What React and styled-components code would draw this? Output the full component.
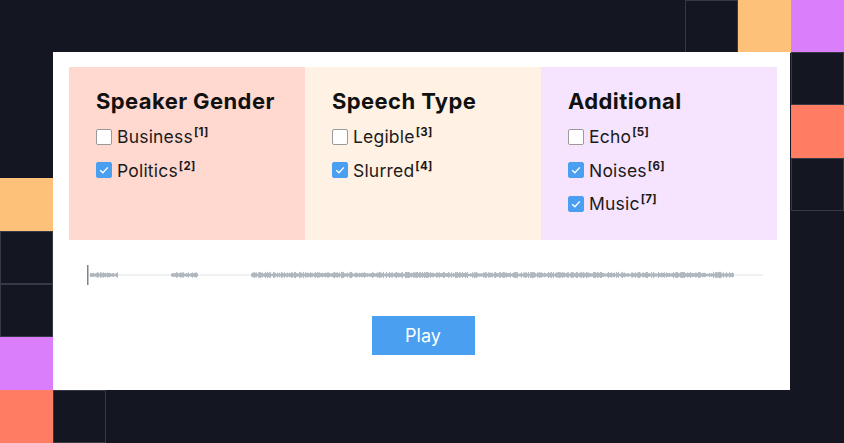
import React from 'react'
import styled, { createGlobalStyle } from 'styled-components'

const GlobalStyle = createGlobalStyle`
  html, body {
    margin: 0;
    padding: 0;
    background: #141722;
  }
  * { box-sizing: border-box; }
`

const Stage = styled.div`
  position: relative;
  width: 844px;
  height: 443px;
  overflow: hidden;
  background: #141722;
  padding: 52px 54px 53px 53px;
`

const Tile = styled.div`
  position: absolute;
  width: 53px;
  height: 53px;
  background: ${(p) => p.$color || '#141722'};
  border: ${(p) => (p.$color ? 'none' : '1px solid #363945')};
`

const Card = styled.div`
  position: relative;
  z-index: 1;
  height: 100%;
  background: #ffffff;
  padding: 15px 13px 0 16px;
  display: flex;
  flex-direction: column;
  align-items: stretch;
`

const Panels = styled.div`
  display: grid;
  grid-template-columns: repeat(3, 236px);
  height: 173px;
`

const Panel = styled.section`
  background: ${(p) => p.$bg};
  padding: 20px 0 0 27px;
`

const Heading = styled.h2`
  margin: 0 0 5px;
  font-family: Inter, 'DejaVu Sans', sans-serif;
  font-weight: 700;
  font-size: 22px;
  letter-spacing: 0.4px;
  line-height: 28px;
  color: #111;
`

const Option = styled.label`
  display: flex;
  align-items: center;
  height: 33.5px;
  font-family: Inter, 'Liberation Sans', sans-serif;
  font-size: 17.5px;
  letter-spacing: 0.2px;
  color: #1b1b1b;
`

const Label = styled.span`
  white-space: nowrap;
`

const Box = styled.span`
  flex: none;
  width: 16px;
  height: 16px;
  margin-right: 5px;
  border-radius: 2px;
  display: inline-flex;
  align-items: center;
  justify-content: center;
  background: ${(p) => (p.$checked ? '#4a9ff0' : '#ffffff')};
  border: 1px solid ${(p) => (p.$checked ? '#4a9ff0' : '#9a9a9a')};
`

const Sup = styled.sup`
  position: relative;
  top: -7px;
  font-size: 11.5px;
  font-weight: 700;
  vertical-align: baseline;
  line-height: 0;
  letter-spacing: 0.3px;
  margin-left: 1px;
`

const Wave = styled.div`
  margin: 25px 0 0 18px;
  width: 677px;
  height: 20px;
`

const ButtonRow = styled.div`
  display: flex;
  justify-content: center;
  margin-top: 31px;
`

const PlayButton = styled.button`
  width: 103px;
  height: 39px;
  border: none;
  background: #4a9ff0;
  color: #fff;
  font-family: Inter, 'Liberation Sans', sans-serif;
  font-size: 18px;
`

const tiles = [
  { x: 685, y: 0 },
  { x: 738, y: 0, c: '#fec17a' },
  { x: 791, y: 0, c: '#da7efc' },
  { x: 791, y: 52 },
  { x: 791, y: 105, c: '#ff7e63' },
  { x: 791, y: 158 },
  { x: 0, y: 178, c: '#fec17a' },
  { x: 0, y: 231 },
  { x: 0, y: 284 },
  { x: 0, y: 337, c: '#da7efc' },
  { x: 0, y: 390, c: '#ff7e63' },
  { x: 53, y: 390 },
]

const groups = [
  {
    title: 'Speaker Gender',
    bg: '#ffd9d0',
    items: [['Business', 1, false], ['Politics', 2, true]],
  },
  {
    title: 'Speech Type',
    bg: '#fff1e3',
    items: [['Legible', 3, false], ['Slurred', 4, true]],
  },
  {
    title: 'Additional',
    bg: '#f6e3fe',
    items: [['Echo', 5, false], ['Noises', 6, true], ['Music', 7, true]],
  },
]

const Check = () => (
  <svg width="12" height="12" viewBox="0 0 12 12">
    <path d="M2.2 6.2 L4.9 8.8 L9.8 3.4" fill="none" stroke="#fff" strokeWidth="1.4" />
  </svg>
)

// pseudo random noise so the wave looks the same every render
const noise = (i) => {
  const s = Math.sin(i * 12.9898) * 43758.5453
  return s - Math.floor(s)
}

const segments = [
  [3, 31, 1.6],
  [84, 111, 1.6],
  [164, 647, 2],
]

const Waveform = () => {
  const bars = []
  segments.forEach(([a, b, amp]) => {
    for (let x = a; x < b; x += 1) {
      const h = 1.2 + noise(x) * amp
      bars.push(<rect key={x} x={x} y={10 - h} width="1" height={h * 2} />)
    }
  })
  return (
    <svg width="677" height="20" viewBox="0 0 677 20">
      <line x1="0" y1="10" x2="676" y2="10" stroke="#dfe2e6" strokeWidth="1" />
      <g fill="#aab1ba" opacity="0.9">{bars}</g>
      <rect x="0" y="0" width="1.5" height="20" fill="#7d838b" />
    </svg>
  )
}

export default function App() {
  return (
    <>
      <GlobalStyle />
      <Stage>
        {tiles.map((t, i) => (
          <Tile key={i} $color={t.c} style={{ left: t.x, top: t.y }} />
        ))}
        <Card>
          <Panels>
            {groups.map((g) => (
              <Panel key={g.title} $bg={g.bg}>
                <Heading>{g.title}</Heading>
                {g.items.map(([label, n, checked]) => (
                  <Option key={label}>
                    <Box $checked={checked}>{checked && <Check />}</Box>
                    <Label>
                      {label}
                      <Sup>[{n}]</Sup>
                    </Label>
                  </Option>
                ))}
              </Panel>
            ))}
          </Panels>
          <Wave>
            <Waveform />
          </Wave>
          <ButtonRow>
            <PlayButton>Play</PlayButton>
          </ButtonRow>
        </Card>
      </Stage>
    </>
  )
}
